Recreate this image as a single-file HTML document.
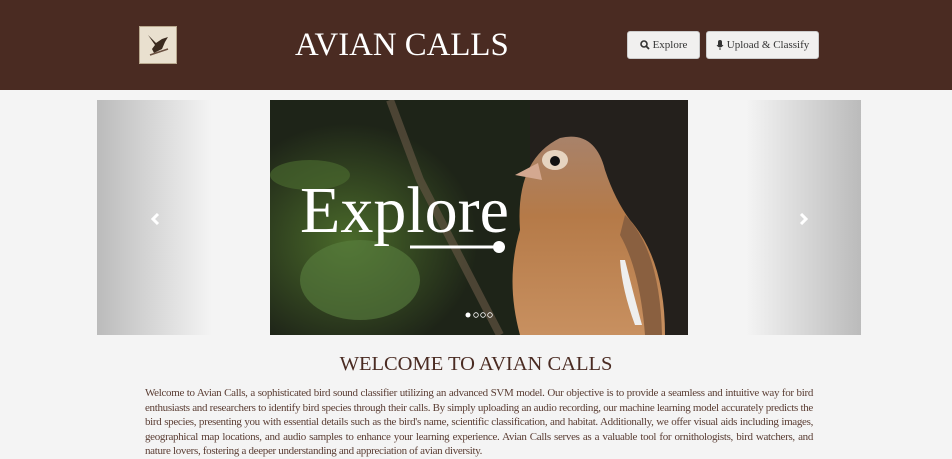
<!DOCTYPE html>
<html><head><meta charset="utf-8"><style>
*{margin:0;padding:0;box-sizing:border-box}
body{width:952px;height:450px;overflow:hidden;background:#f4f4f4;font-family:"Liberation Serif",serif}
.hdr{height:90px;background:#4a2b22;position:relative}
.logo{position:absolute;left:139px;top:26px;width:38px;height:38px;background:#e9e0cf;border:1px solid #b9a98f}
.title{position:absolute;left:295px;top:26px;font-size:33px;color:#fff;line-height:38px;transform:scaleX(0.995);transform-origin:left}
.btn{position:absolute;top:31px;height:28px;background:#f1f0ef;border:1px solid #ccc;border-radius:3px;font-size:11px;color:#333;display:flex;align-items:center;justify-content:center;gap:3px}
.car{position:absolute;left:97px;top:100px;width:764px;height:235px}
.l{position:absolute;left:0;top:0;width:115px;height:235px;background:linear-gradient(90deg,#bbb,#f4f4f4)}
.r{position:absolute;right:0;top:0;width:115px;height:235px;background:linear-gradient(270deg,#bbb,#f4f4f4)}
.img{position:absolute;left:173px;top:0;width:418px;height:235px;overflow:hidden}
.arr{position:absolute;top:113px}
h1{position:absolute;left:0;width:952px;top:353px;text-align:center;font-weight:normal;font-size:20.5px;color:#4a2b22}
p{position:absolute;left:145px;width:668px;top:386px;font-size:11px;letter-spacing:-0.32px;line-height:14.5px;text-align:justify;color:#5a3d33}
</style></head><body>
<div class="hdr">
<div class="logo"><svg width="36" height="36" viewBox="0 0 36 36"><path d="M8 8 L16 16 L22 12 L28 10 L25 15 L22 22 L14 26 L12 22 L15 18 Z" fill="#3a2a1e"/><path d="M10 28 L28 22" stroke="#6a5040" stroke-width="1.5"/></svg></div>
<div class="title">AVIAN CALLS</div>
<div class="btn" style="left:627px;width:73px"><svg width="10" height="10" viewBox="0 0 10 10"><circle cx="4" cy="4" r="3" stroke="#333" stroke-width="1.6" fill="none"/><path d="M6 6 L9 9" stroke="#333" stroke-width="1.8"/></svg>Explore</div>
<div class="btn" style="left:706px;width:113px"><svg width="8" height="11" viewBox="0 0 8 11"><rect x="2" y="0" width="4" height="7" rx="2" fill="#333"/><path d="M1 5 Q4 9 7 5 M4 8 V10" stroke="#333" fill="none"/></svg>Upload &amp; Classify</div>
</div>
<div class="car">
<div class="l"></div><div class="r"></div>
<svg class="arr" style="left:54px" width="10" height="12" viewBox="0 0 10 12"><path d="M7 1 L2 6 L7 11" stroke="#fff" stroke-width="3" fill="none"/></svg>
<svg class="arr" style="left:701px" width="10" height="12" viewBox="0 0 10 12"><path d="M3 1 L8 6 L3 11" stroke="#fff" stroke-width="3" fill="none"/></svg>
<div class="img"><svg width="418" height="235" viewBox="0 0 418 235">
<defs><radialGradient id="g1" cx="0.3" cy="0.6" r="0.5"><stop offset="0" stop-color="#4a6a2a"/><stop offset="1" stop-color="#1e2418"/></radialGradient>
<linearGradient id="bd" x1="0" y1="0" x2="0" y2="1"><stop offset="0" stop-color="#a8826a"/><stop offset="0.4" stop-color="#b57a48"/><stop offset="1" stop-color="#c89060"/></linearGradient></defs>
<rect width="418" height="235" fill="#24201c"/>
<rect width="260" height="235" fill="url(#g1)"/>
<ellipse cx="90" cy="180" rx="60" ry="40" fill="#5a8040" opacity=".6"/>
<ellipse cx="40" cy="75" rx="40" ry="15" fill="#4c6e30" opacity=".6"/>
<path d="M120 0 L150 80 L230 235" stroke="#6a5a48" stroke-width="8" fill="none" opacity=".6"/>
<path d="M250 130 Q245 60 290 38 Q325 30 335 70 Q345 100 360 120 Q395 160 395 235 L250 235 Q235 180 250 130Z" fill="url(#bd)"/>
<path d="M355 115 Q390 150 392 235 L375 235 Q370 170 350 135Z" fill="#8a6040"/>
<path d="M245 75 L268 63 L272 80Z" fill="#d4a890"/>
<ellipse cx="285" cy="60" rx="13" ry="10" fill="#e6d4c0"/>
<circle cx="285" cy="61" r="5" fill="#111"/>
<path d="M355 160 Q365 200 372 225 L365 225 Q352 190 350 160Z" fill="#eee"/>
<text x="30" y="132" font-family="Liberation Serif,serif" font-size="66" fill="#fff">Explore</text>
<path d="M140 147 H225" stroke="#fff" stroke-width="3"/><circle cx="229" cy="147" r="6" fill="#fff"/>
<circle cx="198" cy="215" r="2.5" fill="#fff"/><circle cx="206" cy="215" r="2.3" fill="none" stroke="#fff" stroke-width=".8"/><circle cx="213" cy="215" r="2.3" fill="none" stroke="#fff" stroke-width=".8"/><circle cx="220" cy="215" r="2.3" fill="none" stroke="#fff" stroke-width=".8"/>
</svg></div>
</div>
<h1>WELCOME TO AVIAN CALLS</h1>
<p>Welcome to Avian Calls, a sophisticated bird sound classifier utilizing an advanced SVM model. Our objective is to provide a seamless and intuitive way for bird enthusiasts and researchers to identify bird species through their calls. By simply uploading an audio recording, our machine learning model accurately predicts the bird species, presenting you with essential details such as the bird's name, scientific classification, and habitat. Additionally, we offer visual aids including images, geographical map locations, and audio samples to enhance your learning experience. Avian Calls serves as a valuable tool for ornithologists, bird watchers, and nature lovers, fostering a deeper understanding and appreciation of avian diversity.</p>
</body></html>
